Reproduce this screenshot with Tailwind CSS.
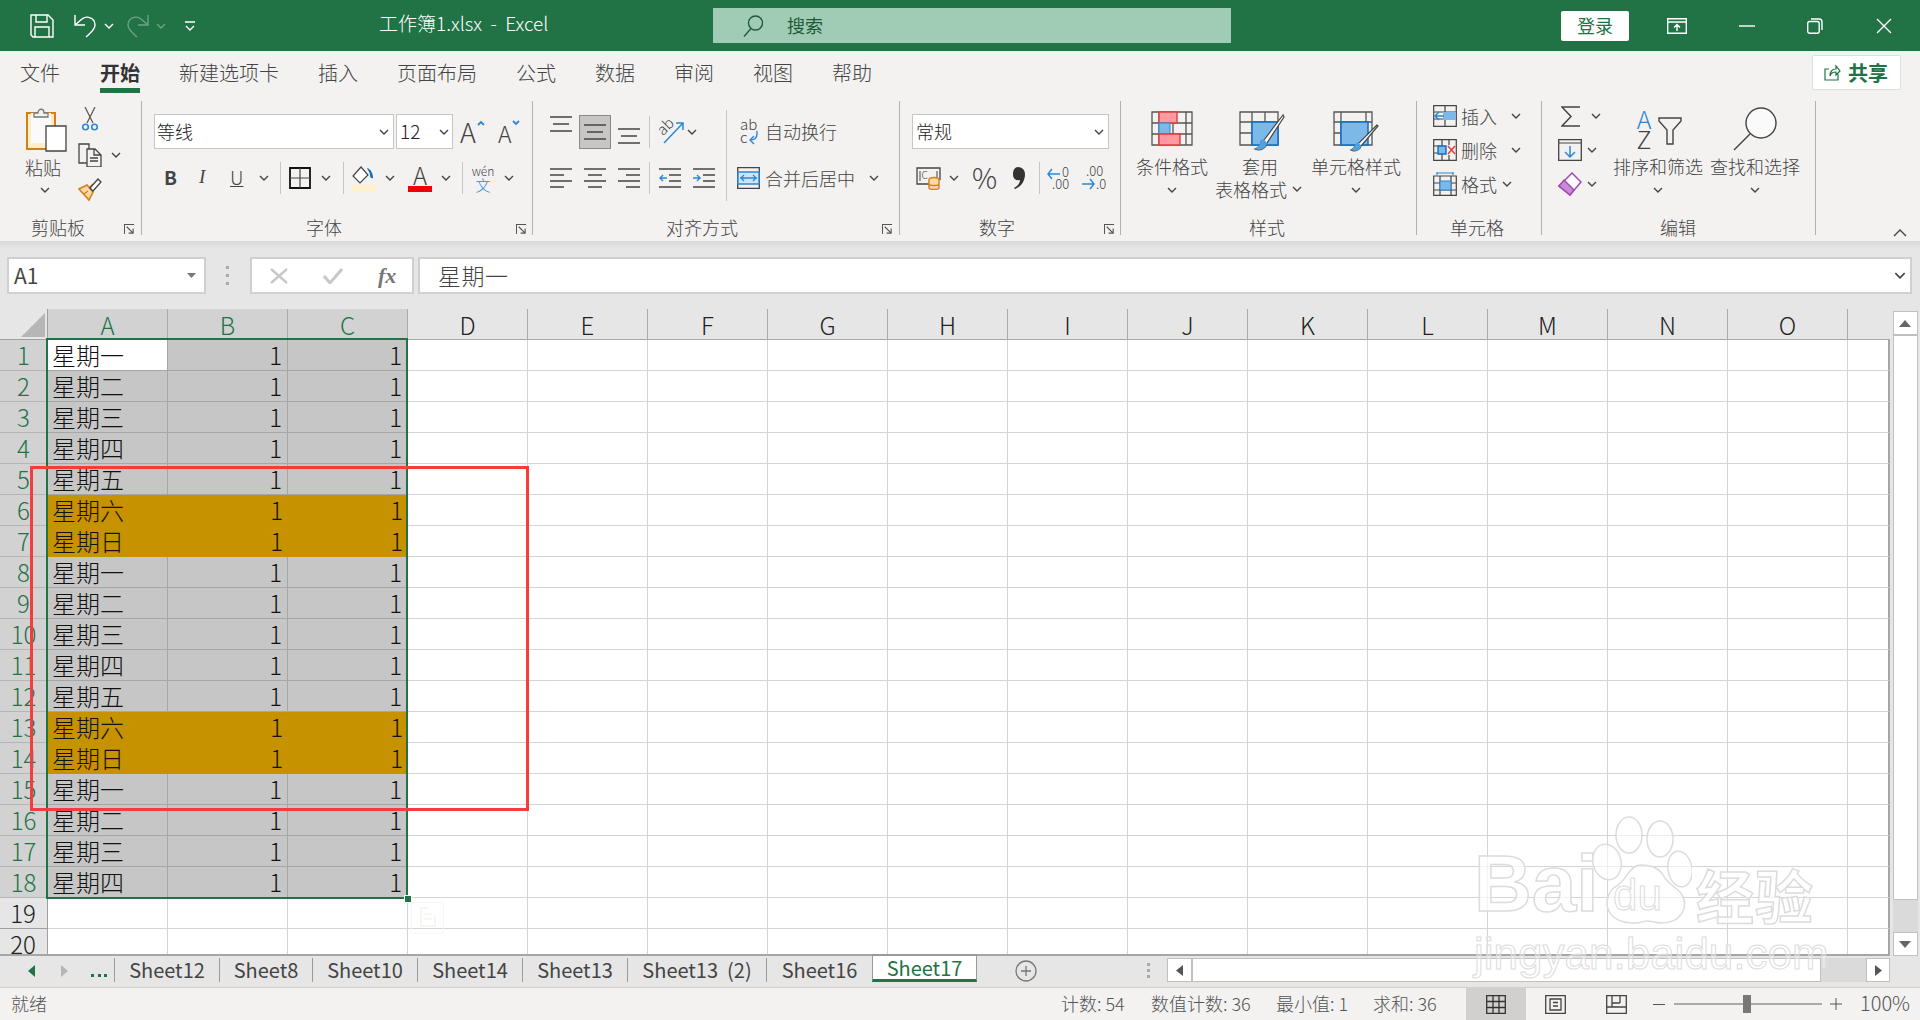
<!DOCTYPE html>
<html lang="zh-CN">
<head>
<meta charset="UTF-8">
<title>工作簿1.xlsx - Excel</title>
<script src="https://cdn.jsdelivr.net/npm/@tailwindcss/browser@4"></script>
</head>
<body class="w-[1920px] h-[1020px] overflow-hidden flex flex-col bg-[#e6e6e6] text-[#444] [font-family:'Noto_Sans_CJK_SC','Liberation_Sans',sans-serif] font-light">

<svg class="hidden">
  <symbol id="chev" viewBox="0 0 10 6"><path d="M1 1l4 4 4-4" fill="none" stroke="#444" stroke-width="1.4"/></symbol>
  <symbol id="launch" viewBox="0 0 12 12"><path d="M.5 11V.5H11M3 3l7 7M10 5v5H5" fill="none" stroke="#555" stroke-width="1.2"/></symbol>
  <symbol id="lines3" viewBox="0 0 22 16"><path d="M0 1h22M3 8h16M0 15h22" stroke="#444" stroke-width="1.3"/></symbol>
</svg>

<!-- title bar -->
<header class="h-[51px] shrink-0 bg-[#217346] flex items-center text-white">
  <svg class="ml-[30px]" width="24" height="24" viewBox="0 0 24 24" fill="none" stroke="#fff" stroke-width="1.4"><path d="M1 1h17l5 5v17H3l-2-2zM6 1v7h11V1M5 23v-10h14v10"/></svg>
  <svg class="ml-[19px]" width="24" height="24" viewBox="0 0 24 24" fill="none" stroke="#fff" stroke-width="1.4"><path d="M2 1v10h10M2 11l7-6c5-4 13-1 13 6 0 5-5 8-9 12"/></svg>
  <svg class="ml-[7px] w-[10px] h-[6px]" viewBox="0 0 10 6"><path d="M1 1l4 4 4-4" fill="none" stroke="#fff" stroke-width="1.4"/></svg>
  <svg class="ml-[12px]" width="24" height="24" viewBox="0 0 24 24" fill="none" stroke="#6ca287" stroke-width="1.4"><path d="M22 1v10H12M22 11l-7-6C10 1 2 4 2 11c0 5 5 8 9 12"/></svg>
  <svg class="ml-[6px] w-[10px] h-[6px]" viewBox="0 0 10 6"><path d="M1 1l4 4 4-4" fill="none" stroke="#6ca287" stroke-width="1.4"/></svg>
  <svg class="ml-[19px]" width="10" height="10" viewBox="0 0 10 10" fill="none" stroke="#fff" stroke-width="1.4"><path d="M0 1h10M1 5l4 4 4-4"/></svg>
  <span class="ml-[184px] text-[19px] w-[170px] -mt-[4px] whitespace-pre">工作簿1.xlsx  -  Excel</span>
  <div class="ml-[164px] w-[518px] h-[35px] bg-[#a0cbb4] flex items-center">
    <svg class="ml-[30px]" width="20" height="22" viewBox="0 0 20 22" fill="none" stroke="#1e5a38" stroke-width="1.4"><circle cx="12.500" cy="8" r="7"/><path d="M8 13.500L1 21.500"/></svg>
    <span class="ml-[24px] text-[18px] font-normal text-[#1e5a38]">搜索</span>
  </div>
  <button class="ml-[330px] w-[68px] h-[30px] bg-white rounded-[2px] text-[18px] font-normal text-[#217346]">登录</button>
  <svg class="ml-[38px]" width="20" height="16" viewBox="0 0 20 16" fill="none" stroke="#fff" stroke-width="1.4"><path d="M.7.7h18.600v14.600H.7zM1 4h18M10 13V7M7 9.500l3-3 3 3"/></svg>
  <svg class="ml-[52px]" width="16" height="2" viewBox="0 0 16 2"><path d="M0 1h16" stroke="#fff" stroke-width="1.4"/></svg>
  <svg class="ml-[52px]" width="16" height="16" viewBox="0 0 16 16" fill="none" stroke="#fff" stroke-width="1.4"><rect x=".7" y="3.500" width="11.500" height="11.800" rx="2"/><path d="M4 1h8a3 3 0 013 3v8"/></svg>
  <svg class="ml-[53px]" width="16" height="16" viewBox="0 0 16 16" fill="none" stroke="#fff" stroke-width="1.4"><path d="M1 1l14 14M15 1L1 15"/></svg>
</header>

<!-- ribbon -->
<section class="h-[190px] shrink-0 bg-[#f3f2f1] flex flex-col">
  <nav class="h-[42px] shrink-0 flex items-start gap-[39px] pl-[20px] text-[20px] leading-[44px] text-[#444] relative">
    <span>文件</span>
    <span class="ml-[1px] font-bold text-[#333] h-[42px] border-b-[5px] border-[#217346]">开始</span>
    <span>新建选项卡</span><span>插入</span><span>页面布局</span><span>公式</span><span>数据</span><span>审阅</span><span>视图</span><span>帮助</span>
    <div class="ml-auto mr-[19px] mt-[4px] w-[89px] h-[35px] bg-white border border-[#e1dfdd] rounded-[2px] flex items-center">
      <svg class="ml-[11px]" width="17" height="17" viewBox="0 0 17 17" fill="none" stroke="#217346" stroke-width="1.2"><path d="M14 10v6H1V5h4M6 12c0-5 3-7 6-7V2l4 5-4 4V8c-3 0-5 1-6 4z"/></svg>
      <span class="ml-[7px] font-bold text-[#217346] text-[20px] leading-none">共享</span>
    </div>
  </nav>
  <div class="flex pt-[8px] h-[148px] text-[18px] leading-[22px]">

    <!-- clipboard -->
    <div class="w-[142px] h-[134px] shrink-0 border-r border-[#b3b0ad] flex flex-col">
      <div class="h-[115px] shrink-0 flex">
        <div class="ml-[25px] w-[42px] flex flex-col">
          <svg class="mt-[6px] ml-[1px]" width="41" height="45" viewBox="0 0 41 45"><path d="M1 6h28v36H1z" fill="#fdeecb" stroke="#d67f16" stroke-width="2"/><path d="M5 6h20v30H5z" fill="#fafafa"/><path d="M8 10V6h4c0-5 6-5 6 0h4v4z" fill="#f3f2f1" stroke="#777" stroke-width="1.300"/><path d="M20 19h20v25H20z" fill="#fff" stroke="#444" stroke-width="1.300"/></svg>
          <span class="mt-[4px]">粘贴</span>
          <svg class="mt-[9px] ml-[15px] w-[10px] h-[6px] shrink-0"><use href="#chev"/></svg>
        </div>
        <div class="ml-[11px] flex flex-col">
          <svg class="mt-[6px] ml-[4px]" width="16" height="24" viewBox="0 0 16 24" fill="none"><path d="M3 0l8 16M13 0L5 16" stroke="#555" stroke-width="1.200"/><circle cx="3.500" cy="20" r="2.800" stroke="#2b88d8" stroke-width="1.600"/><circle cx="12.500" cy="20" r="2.800" stroke="#2b88d8" stroke-width="1.600"/></svg>
          <div class="mt-[12px] flex items-center">
            <svg width="24" height="24" viewBox="0 0 24 24" fill="none" stroke="#444" stroke-width="1.300"><path d="M9 20H1V1h10v5M9 6h8l6 6v12H9zM16 6v6h7M12 15h8M12 18h8"/></svg>
            <svg class="ml-[9px] w-[10px] h-[6px]"><use href="#chev"/></svg>
          </div>
          <svg class="mt-[11px]" width="24" height="24" viewBox="0 0 24 24"><path d="M1 11l10 11 4-8-6-7z" fill="#fbd9a8" stroke="#d67f16" stroke-width="1.600"/><path d="M6 16l4-3M11 10l4-4" stroke="#d67f16" stroke-width="1.400"/><path d="M12 10L20 1l3 3-8 9z" fill="#fff" stroke="#444" stroke-width="1.300"/></svg>
        </div>
      </div>
      <div class="flex pl-[31px] pr-[6px]"><span>剪贴板</span><svg class="ml-auto mt-[8px] w-[11px] h-[11px]"><use href="#launch"/></svg></div>
    </div>

    <!-- font -->
    <div class="w-[391px] h-[134px] shrink-0 border-r border-[#b3b0ad] flex flex-col">
      <div class="h-[115px] shrink-0 pl-[12px]">
        <div class="mt-[13px] h-[35px] flex">
          <div class="w-[240px] bg-white border border-[#c8c6c4] flex items-center pl-[2px] pb-[2px] text-[#222]">等线<svg class="ml-auto mr-[4px] mt-[2px] w-[10px] h-[6px]"><use href="#chev"/></svg></div>
          <div class="ml-[2px] w-[57px] bg-white border border-[#c8c6c4] flex items-center pl-[3px] pb-[2px] text-[#222] text-[19px]">12<svg class="ml-auto mr-[3px] mt-[2px] w-[10px] h-[6px]"><use href="#chev"/></svg></div>
          <span class="ml-[7px] w-[17px] text-[27px] leading-[36px]">A</span>
          <svg class="mt-[6px]" width="8" height="6" viewBox="0 0 8 6"><path d="M1 5l3-3 3 3" fill="none" stroke="#2b88d8" stroke-width="1.800"/></svg>
          <span class="ml-[13px] w-[14px] text-[23px] leading-[38px]">A</span>
          <svg class="mt-[6px]" width="8" height="6" viewBox="0 0 8 6"><path d="M1 1l3 3 3-3" fill="none" stroke="#2b88d8" stroke-width="1.800"/></svg>
        </div>
        <div class="mt-[12px] h-[34px] flex items-center">
          <span class="ml-[10px] w-[12px] font-bold text-[19px] -mt-[2px]">B</span>
          <span class="ml-[23px] w-[10px] italic text-[19px] -mt-[2px] [font-family:'Liberation_Serif',serif]">I</span>
          <span class="ml-[21px] w-[15px] underline text-[19px] -mt-[2px]">U</span>
          <svg class="ml-[14px] w-[10px] h-[6px]"><use href="#chev"/></svg>
          <div class="ml-[11px] w-px h-[32px] bg-[#c8c6c4]"></div>
          <svg class="ml-[8px]" width="22" height="22" viewBox="0 0 22 22" fill="none" stroke="#111"><path d="M1 1h20v20H1z" stroke-width="1.800"/><path d="M11 1v20M1 11h20" stroke-width="1.200" stroke="#444"/></svg>
          <svg class="ml-[10px] w-[10px] h-[6px]"><use href="#chev"/></svg>
          <div class="ml-[12px] w-px h-[32px] bg-[#c8c6c4]"></div>
          <svg class="ml-[8px]" width="24" height="25" viewBox="0 0 24 25"><path d="M9 1L1 10l7 7 8-8z" fill="#fff" stroke="#444" stroke-width="1.200"/><path d="M15 2c4 1 6 6 6 10-2 1-3-1-3-3 0-3-2-4-3-7z" fill="#106ebe"/><path d="M0 19h24v6H0z" fill="#fff1cc"/></svg>
          <svg class="ml-[9px] w-[10px] h-[6px]"><use href="#chev"/></svg>
          <div class="ml-[13px] w-[24px] flex flex-col items-center text-[24px] leading-[20px] text-[#444]">A<div class="w-[24px] h-[6px] bg-[#f00000] mt-[1px]"></div></div>
          <svg class="ml-[9px] w-[10px] h-[6px]"><use href="#chev"/></svg>
          <div class="ml-[11px] w-px h-[32px] bg-[#c8c6c4]"></div>
          <div class="ml-[9px] w-[22px] flex flex-col items-center leading-none text-[12px]">wén<span class="text-[15px] text-[#2b88d8]">文</span></div>
          <svg class="ml-[10px] w-[10px] h-[6px]"><use href="#chev"/></svg>
        </div>
      </div>
      <div class="flex pl-[164px] pr-[5px]"><span>字体</span><svg class="ml-auto mt-[8px] w-[11px] h-[11px]"><use href="#launch"/></svg></div>
    </div>

    <!-- alignment -->
    <div class="w-[367px] h-[134px] shrink-0 border-r border-[#b3b0ad] flex flex-col">
      <div class="h-[115px] shrink-0 flex">
        <div class="w-[193px] shrink-0">
          <div class="mt-[13px] h-[35px] flex items-center">
            <svg class="ml-[17px] -mt-[15px] w-[22px] h-[16px]"><use href="#lines3"/></svg>
            <div class="ml-[7px] w-[32px] h-[34px] bg-[#c8c6c4] border border-[#8a8886] flex items-center justify-center"><svg class="w-[22px] h-[16px]"><use href="#lines3"/></svg></div>
            <svg class="ml-[7px] mt-[8px] w-[22px] h-[16px]"><use href="#lines3"/></svg>
            <div class="ml-[9px] w-px h-[32px] bg-[#c8c6c4]"></div>
            <svg class="ml-[9px]" width="25" height="24" viewBox="0 0 25 24" fill="none"><path d="M5 23L24 3M17 3h7v7" stroke="#2b88d8" stroke-width="1.500"/><text x="0" y="13" font-size="15" fill="#444" transform="rotate(-45 6 10)">ab</text></svg>
            <svg class="ml-[3px] w-[10px] h-[6px]"><use href="#chev"/></svg>
          </div>
          <div class="mt-[12px] h-[34px] flex items-center">
            <svg class="ml-[17px]" width="22" height="20" viewBox="0 0 22 20"><path d="M0 1h22M0 7h14M0 13h22M0 19h14" stroke="#444" stroke-width="1.300"/></svg>
            <svg class="ml-[12px]" width="22" height="20" viewBox="0 0 22 20"><path d="M0 1h22M4 7h14M0 13h22M4 19h14" stroke="#444" stroke-width="1.300"/></svg>
            <svg class="ml-[12px]" width="22" height="20" viewBox="0 0 22 20"><path d="M0 1h22M8 7h14M0 13h22M8 19h14" stroke="#444" stroke-width="1.300"/></svg>
            <div class="ml-[9px] w-px h-[32px] bg-[#c8c6c4]"></div>
            <svg class="ml-[9px]" width="22" height="20" viewBox="0 0 22 20" fill="none"><path d="M0 1h22M10 7h12M10 13h12M0 19h22" stroke="#444" stroke-width="1.300"/><path d="M8 10H1M4 7l-3 3 3 3" stroke="#2b88d8" stroke-width="1.400"/></svg>
            <svg class="ml-[12px]" width="22" height="20" viewBox="0 0 22 20" fill="none"><path d="M0 1h22M10 7h12M10 13h12M0 19h22" stroke="#444" stroke-width="1.300"/><path d="M0 10h7M4 7l3 3-3 3" stroke="#2b88d8" stroke-width="1.400"/></svg>
          </div>
        </div>
        <div class="mt-[9px] w-px h-[91px] bg-[#c8c6c4]"></div>
        <div class="flex-1">
          <div class="mt-[13px] h-[35px] flex items-center">
            <svg class="ml-[13px]" width="20" height="26" viewBox="0 0 20 26" fill="none"><text x="0" y="11" font-size="15" fill="#444">ab</text><text x="0" y="24" font-size="15" fill="#444">c</text><path d="M17 12v3c0 5-3 6-7 6M14 17l-4 4 4 4" stroke="#2b88d8" stroke-width="1.400"/></svg>
            <span class="ml-[5px] -mt-[2px]">自动换行</span>
          </div>
          <div class="mt-[12px] h-[34px] flex items-center">
            <svg class="ml-[10px]" width="23" height="22" viewBox="0 0 23 22" fill="none"><path d="M.7.7h21.600v20.600H.7z" stroke="#444" stroke-width="1.300"/><path d="M1 5h21v12H1z" fill="#cfe4f6" stroke="#2b88d8" stroke-width="1.400"/><path d="M3 11h17M7 8l-3 3 3 3M16 8l3 3-3 3" stroke="#2b88d8" stroke-width="1.300"/></svg>
            <span class="ml-[5px]">合并后居中</span>
            <svg class="ml-[14px] w-[10px] h-[6px]"><use href="#chev"/></svg>
          </div>
        </div>
      </div>
      <div class="flex pl-[133px] pr-[6px]"><span>对齐方式</span><svg class="ml-auto mt-[8px] w-[11px] h-[11px]"><use href="#launch"/></svg></div>
    </div>

    <!-- number -->
    <div class="w-[221px] h-[134px] shrink-0 border-r border-[#b3b0ad] flex flex-col">
      <div class="h-[115px] shrink-0">
        <div class="mt-[13px] ml-[12px] w-[197px] h-[35px] bg-white border border-[#c8c6c4] flex items-center pl-[3px] pb-[2px] text-[#222]">常规<svg class="ml-auto mr-[4px] mt-[2px] w-[10px] h-[6px]"><use href="#chev"/></svg></div>
        <div class="mt-[12px] h-[34px] flex items-center">
          <svg class="ml-[16px]" width="25" height="24" viewBox="0 0 25 24" fill="none"><path d="M14 18H1V2h23v12" stroke="#444" stroke-width="1.300"/><path d="M4 5v10M21 5v8" stroke="#444"/><text x="5.500" y="13" font-size="10" fill="#444">C</text><ellipse cx="18" cy="14" rx="5" ry="2.500" fill="#fbd9a8" stroke="#d67f16" stroke-width="1.400"/><path d="M13 14v8c0 2 10 2 10 0v-8M13 18c0 2 10 2 10 0" fill="#fbd9a8" stroke="#d67f16" stroke-width="1.400"/></svg>
          <svg class="ml-[8px] w-[10px] h-[6px]"><use href="#chev"/></svg>
          <span class="ml-[13px] w-[23px] text-[28px] leading-none -mt-[2px]">%</span>
          <svg class="ml-[18px]" width="12" height="23" viewBox="0 0 12 23"><path d="M5 0c4 0 7 3 7 7 0 7-4 13-10 15l-1-1c4-2 6-5 6-8-4 1-7-1-7-6 0-4 2-7 5-7z" fill="#333"/></svg>
          <div class="ml-[14px] w-px h-[32px] bg-[#c8c6c4]"></div>
          <svg class="ml-[7px]" width="24" height="24" viewBox="0 0 24 24" fill="none"><path d="M13 8H1M5 3L1 8l4 5" stroke="#2b88d8" stroke-width="1.500"/><text x="15" y="11" font-size="13" fill="#444">0</text><text x="5" y="23" font-size="13" fill="#444">.00</text></svg>
          <svg class="ml-[11px]" width="24" height="24" viewBox="0 0 24 24" fill="none"><text x="4" y="10" font-size="13" fill="#444">.00</text><path d="M0 18h12M8 13l4 5-4 5" stroke="#2b88d8" stroke-width="1.500"/><text x="14" y="23" font-size="13" fill="#444">.0</text></svg>
        </div>
      </div>
      <div class="flex pl-[79px] pr-[5px]"><span>数字</span><svg class="ml-auto mt-[8px] w-[11px] h-[11px]"><use href="#launch"/></svg></div>
    </div>

    <!-- styles -->
    <div class="w-[296px] h-[134px] shrink-0 border-r border-[#b3b0ad] flex flex-col">
      <div class="h-[115px] shrink-0 flex">
        <div class="ml-[15px] w-[72px] flex flex-col items-center">
          <div class="h-[54px] pt-[10px]">
            <svg width="42" height="35" viewBox="0 0 42 35" fill="none"><path d="M1 1h40v33H1zM1 12h40M1 23h40M8 1v33M22 1v33M35 1v33" stroke="#555" stroke-width="1.300"/><path d="M8 1h18v11H8z" fill="#ff9aa2" stroke="#e03c3c" stroke-width="1.400"/><path d="M8 12h11v11H8z" fill="#7cb9e8" stroke="#2b88d8"/><path d="M8 23h21v11H8z" fill="#ff9aa2" stroke="#e03c3c" stroke-width="1.400"/></svg>
          </div>
          <span>条件格式</span>
          <svg class="mt-[10px] w-[10px] h-[6px] shrink-0"><use href="#chev"/></svg>
        </div>
        <div class="ml-[7px] w-[87px] flex flex-col">
          <div class="h-[54px] pt-[10px] pl-[24px]">
            <svg width="46" height="41" viewBox="0 0 46 41" fill="none"><path d="M1 1h38v33H1zM1 11h38M1 22h38M13 1v33M26 1v33" stroke="#555" stroke-width="1.300"/><path d="M13 11h26v23H13z" fill="#7cb9e8" stroke="#106ebe" stroke-width="1.500"/><path d="M44 4L25 29c-2 0-3 1-3 3-1 3-3 5-6 6 5 2 11 0 12-6l17-26z" fill="#fff" stroke="#444" stroke-width="1.200"/><path d="M22 30c-1 4-3 6-6 8 5 2 11 0 12-6l-3-4z" fill="#4fa3e0"/></svg>
          </div>
          <span class="pl-[27px]">套用</span>
          <div class="flex items-center leading-[24px] whitespace-nowrap">表格格式<svg class="ml-[5px] w-[10px] h-[6px]"><use href="#chev"/></svg></div>
        </div>
        <div class="ml-[9px] w-[90px] flex flex-col items-center">
          <div class="h-[54px] pt-[10px]">
            <svg width="46" height="41" viewBox="0 0 46 41" fill="none"><path d="M1 1h38v33H1zM1 11h38M1 22h38M8 1v33M33 1v33" stroke="#555" stroke-width="1.300"/><path d="M8 11h27v23H8z" fill="#7cb9e8" stroke="#106ebe" stroke-width="1.500"/><path d="M44 14L25 33c-2 0-3 1-3 2-1 2-2 3-4 4 4 2 9 0 10-4l17-20z" fill="#fff" stroke="#444" stroke-width="1.200"/><path d="M24 31c-2 3-3 5-6 8 5 2 10 0 10-5z" fill="#4fa3e0"/></svg>
          </div>
          <span>单元格样式</span>
          <svg class="mt-[10px] w-[10px] h-[6px] shrink-0"><use href="#chev"/></svg>
        </div>
      </div>
      <div class="pl-[128px]">样式</div>
    </div>

    <!-- cells -->
    <div class="w-[125px] h-[134px] shrink-0 border-r border-[#b3b0ad] flex flex-col">
      <div class="h-[115px] shrink-0">
        <div class="h-[34px] -mt-[2px] flex items-center">
          <svg class="ml-[16px]" width="24" height="22" viewBox="0 0 24 22" fill="none"><path d="M.7.7h22.600v20.600H.7zM1 7h22M1 14h22M12 1v20" stroke="#444" stroke-width="1.200"/><path d="M10 7h13v8H10z" fill="#7cb9e8"/><path d="M11 11H2M6 7l-4 4 4 4" stroke="#2b88d8" stroke-width="1.500"/></svg>
          <span class="ml-[4px]">插入</span><svg class="ml-[14px] w-[10px] h-[6px]"><use href="#chev"/></svg>
        </div>
        <div class="h-[34px] flex items-center">
          <svg class="ml-[16px]" width="24" height="22" viewBox="0 0 24 22" fill="none"><path d="M.7.7h22.600v20.600H.7zM1 7h8M1 14h8M9 1v6M9 14v7M16 1v5M16 16v5" stroke="#444" stroke-width="1.200"/><path d="M5 7h8v8H5z" fill="#7cb9e8" stroke="#106ebe" stroke-width="1.400"/><path d="M15 7l7 8M22 7l-7 8" stroke="#f03a3a" stroke-width="1.600"/></svg>
          <span class="ml-[4px]">删除</span><svg class="ml-[14px] w-[10px] h-[6px]"><use href="#chev"/></svg>
        </div>
        <div class="h-[34px] flex items-center">
          <svg class="ml-[16px]" width="24" height="24" viewBox="0 0 24 24" fill="none"><path d="M.7 4h22.600v19.300H.7zM1 11h22M1 18h22M7 4v19M18 4v19" stroke="#444" stroke-width="1.200"/><path d="M7 9h11v9H7z" fill="#7cb9e8" stroke="#2b88d8"/><path d="M4 1h16M4 0v3M20 0v3" stroke="#2b88d8" stroke-width="1.200"/></svg>
          <span class="ml-[4px]">格式</span><svg class="ml-[5px] w-[10px] h-[6px]"><use href="#chev"/></svg>
        </div>
      </div>
      <div class="pl-[33px]">单元格</div>
    </div>

    <!-- editing -->
    <div class="w-[274px] h-[134px] shrink-0 border-r border-[#b3b0ad] flex flex-col">
      <div class="h-[115px] shrink-0 flex">
        <div class="ml-[16px] w-[55px]">
          <div class="h-[34px] -mt-[2px] flex items-center">
            <svg class="ml-[3px]" width="19" height="21" viewBox="0 0 19 21" fill="none"><path d="M19 1H1l9 9.500L1 20h18" stroke="#444" stroke-width="1.500"/></svg>
            <svg class="ml-[11px] w-[10px] h-[6px]"><use href="#chev"/></svg>
          </div>
          <div class="h-[34px] flex items-center">
            <svg width="24" height="22" viewBox="0 0 24 22" fill="none"><path d="M.7.7h22.600v20.600H.7z" stroke="#444" stroke-width="1.300"/><path d="M1 4h22" stroke="#444"/><path d="M12 7v11M7 13l5 5 5-5" stroke="#2b88d8" stroke-width="1.500"/></svg>
            <svg class="ml-[5px] w-[10px] h-[6px]"><use href="#chev"/></svg>
          </div>
          <div class="h-[34px] flex items-center">
            <svg width="24" height="24" viewBox="0 0 24 24"><path d="M14 1l9 9-11 13-11-9z" fill="#fff" stroke="#a24bb3" stroke-width="1.500"/><path d="M6 8l10 10-4 5-11-9z" fill="#c88bd4" stroke="#a24bb3" stroke-width="1.500"/></svg>
            <svg class="ml-[5px] w-[10px] h-[6px]"><use href="#chev"/></svg>
          </div>
        </div>
        <div class="w-[90px] flex flex-col items-center">
          <div class="h-[54px] pt-[7px] flex">
            <div class="w-[19px] flex flex-col items-center text-[25px] leading-[20px]"><span class="text-[#2b88d8]">A</span><span class="text-[#444]">Z</span></div>
            <svg class="ml-[4px] mt-[9px]" width="24" height="28" viewBox="0 0 24 28" fill="none"><path d="M1 1h22v3l-8 9v14H9V13L1 4z" stroke="#444" stroke-width="1.400"/></svg>
          </div>
          <span>排序和筛选</span>
          <svg class="mt-[10px] w-[10px] h-[6px] shrink-0"><use href="#chev"/></svg>
        </div>
        <div class="ml-[7px] w-[90px] flex flex-col items-center">
          <div class="h-[54px] pt-[6px]">
            <svg width="44" height="44" viewBox="0 0 44 44" fill="none" stroke="#444" stroke-width="1.400"><circle cx="28" cy="16" r="15" fill="#fafafa"/><path d="M17 27L1 43"/></svg>
          </div>
          <span>查找和选择</span>
          <svg class="mt-[10px] w-[10px] h-[6px] shrink-0"><use href="#chev"/></svg>
        </div>
      </div>
      <div class="pl-[118px]">编辑</div>
    </div>

    <svg class="self-end ml-auto mr-[13px] mb-[4px] w-[14px] h-[8px]" viewBox="0 0 14 8"><path d="M1 7l6-6 6 6" fill="none" stroke="#444" stroke-width="1.400"/></svg>
  </div>
</section>

<!-- formula bar -->
<section class="h-[68px] shrink-0 bg-[linear-gradient(#d9d9d9,#e6e6e6_8px)] pt-[16px] flex items-start">
  <div class="ml-[7px] w-[199px] h-[37px] bg-white border-2 border-[#d0d0d0] flex items-center pl-[5px] text-[21px] font-normal text-[#444]">A1<svg class="ml-auto mr-[8px]" width="9" height="5" viewBox="0 0 9 5"><path d="M0 0h9L4.500 5z" fill="#777"/></svg></div>
  <div class="ml-[20px] mt-[9px] flex flex-col gap-[5px]"><i class="w-[3px] h-[3px] bg-[#aaa]"></i><i class="w-[3px] h-[3px] bg-[#aaa]"></i><i class="w-[3px] h-[3px] bg-[#aaa]"></i></div>
  <div class="ml-[21px] w-[164px] h-[37px] bg-white border-2 border-[#d0d0d0] flex items-center">
    <svg class="ml-[18px]" width="18" height="16" viewBox="0 0 18 16"><path d="M1 1l16 14M17 1L1 15" stroke="#c8c8c8" stroke-width="2.400"/></svg>
    <svg class="ml-[35px]" width="20" height="16" viewBox="0 0 20 16"><path d="M1 8l6 7L19 1" fill="none" stroke="#c8c8c8" stroke-width="3"/></svg>
    <span class="ml-[35px] italic font-bold text-[22px] text-[#777] [font-family:'Liberation_Serif',serif]">fx</span>
  </div>
  <div class="ml-[4px] w-[1494px] h-[37px] bg-white border-2 border-[#d0d0d0] flex items-center pl-[18px] text-[23px] tracking-[0.5px] text-[#444]">星期一<svg class="ml-auto mr-[4px] w-[12px] h-[7px]"><use href="#chev"/></svg></div>
</section>

<!-- sheet -->
<section class="h-[645px] shrink-0 flex">
  <div class="relative w-[1890px] overflow-hidden bg-white">
    <div id="cells" class="grid grid-cols-[48px_repeat(15,120px)_42px] auto-rows-[31px] text-[24px] leading-[30px] text-[#111]">
      <div class="bg-[#e6e6e6] border-b border-[#9f9f9f] border-r flex items-end justify-end pr-[2px] pb-[2px]"><svg width="24" height="24" viewBox="0 0 24 24"><path d="M24 0v24H0z" fill="#b6b6b6"/></svg></div>
    </div>
    <!-- selection and annotation -->
    <div class="absolute left-[46px] top-[29px] w-[362px] h-[561px] border-2 border-[#217346] pointer-events-none"></div>
    <div class="absolute left-[404px] top-[586px] w-[8px] h-[8px] bg-[#217346] border border-white"></div>
    <div class="absolute left-[30px] top-[157px] w-[499px] h-[345px] border-[3px] border-[#fb3b3b] pointer-events-none"></div>
    <div class="absolute left-[411px] top-[593px] w-[33px] h-[32px] border border-[#f6f6f6] rounded-[1px] flex items-center justify-center"><svg width="18" height="22" viewBox="0 0 18 22" fill="none" stroke="#f8f5f2" stroke-width="2"><path d="M9 1H2v18h14V8M5 7h8M5 12h8"/></svg></div>
  </div>
  <aside class="relative z-10 w-[30px] h-[648px] flex flex-col items-center bg-[#e6e6e6] pt-[2px]">
    <div class="w-[25px] h-[24px] bg-white border border-[#c0c0c0] flex items-center justify-center"><svg width="12" height="7" viewBox="0 0 12 7"><path d="M6 0l6 7H0z" fill="#666"/></svg></div>
    <div class="w-[25px] h-[565px] bg-white border border-[#c0c0c0]"></div>
    <div class="w-[25px] h-[32px] bg-[#dadada]"></div>
    <div class="w-[25px] h-[24px] bg-white border border-[#c0c0c0] flex items-center justify-center"><svg width="12" height="7" viewBox="0 0 12 7"><path d="M0 0h12L6 7z" fill="#666"/></svg></div>
  </aside>
</section>

<!-- sheet tabs -->
<section class="h-[33px] shrink-0 bg-[#e6e6e6] border-t-2 border-[#a6a6a6] flex text-[20px] text-[#444] font-normal">
  <svg class="ml-[28px] mt-[9px]" width="7" height="12" viewBox="0 0 7 12"><path d="M7 0v12L0 6z" fill="#217346"/></svg>
  <svg class="ml-[26px] mt-[9px]" width="7" height="12" viewBox="0 0 7 12"><path d="M0 0v12l7-6z" fill="#b5b5b5"/></svg>
  <div class="ml-[23px] mt-[18px] w-[16px] h-[3px] border-dotted border-t-[3px] border-[#217346]"></div>
  <div class="ml-[7px] flex">
    <div class="w-[105px] h-[24px] mt-[2px] border-l border-[#9a9a9a] flex items-center justify-center">Sheet12</div>
    <div class="w-[93px] h-[24px] mt-[2px] border-l border-[#9a9a9a] flex items-center justify-center">Sheet8</div>
    <div class="w-[105px] h-[24px] mt-[2px] border-l border-[#9a9a9a] flex items-center justify-center">Sheet10</div>
    <div class="w-[105px] h-[24px] mt-[2px] border-l border-[#9a9a9a] flex items-center justify-center">Sheet14</div>
    <div class="w-[105px] h-[24px] mt-[2px] border-l border-[#9a9a9a] flex items-center justify-center">Sheet13</div>
    <div class="w-[139px] h-[24px] mt-[2px] border-l border-[#9a9a9a] flex items-center justify-center whitespace-pre">Sheet13  (2)</div>
    <div class="w-[106px] h-[24px] mt-[2px] border-l border-[#9a9a9a] flex items-center justify-center">Sheet16</div>
    <div class="w-[105px] h-[28px] -mt-[2px] bg-white border-x border-t-2 border-[#9a9a9a] border-b-[3px] border-b-[#217346] flex items-center justify-center text-[#217346]">Sheet17</div>
  </div>
  <svg class="ml-[38px] mt-[4px]" width="22" height="22" viewBox="0 0 22 22" fill="none" stroke="#777" stroke-width="1.300"><circle cx="11" cy="11" r="10"/><path d="M11 6v10M6 11h10"/></svg>
  <div class="ml-[110px] mt-[7px] flex flex-col gap-[3px]"><i class="w-[3px] h-[3px] bg-[#aaa]"></i><i class="w-[3px] h-[3px] bg-[#aaa]"></i><i class="w-[3px] h-[3px] bg-[#aaa]"></i></div>
  <div class="ml-[17px] mt-[2px] h-[24px] flex">
    <div class="w-[25px] bg-white border border-[#c0c0c0] flex items-center justify-center"><svg width="7" height="11" viewBox="0 0 7 11"><path d="M7 0v11L0 5.500z" fill="#555"/></svg></div>
    <div class="w-[629px] bg-white border border-[#c0c0c0]"></div>
    <div class="w-[45px] bg-[#dadada]"></div>
    <div class="w-[24px] bg-white border border-[#c0c0c0] flex items-center justify-center"><svg width="7" height="11" viewBox="0 0 7 11"><path d="M0 0v11l7-5.500z" fill="#555"/></svg></div>
  </div>
</section>

<!-- status bar -->
<footer class="h-[33px] shrink-0 bg-[#f3f2f1] border-t border-[#d2d0ce] flex items-center text-[18px] text-[#555]">
  <span class="ml-[11px] -mt-[2px]">就绪</span>
  <span class="ml-[1014px] w-[68px] -mt-[2px] whitespace-nowrap">计数: 54</span>
  <span class="ml-[22px] w-[103px] -mt-[2px] whitespace-nowrap">数值计数: 36</span>
  <span class="ml-[22px] w-[74px] -mt-[2px] whitespace-nowrap">最小值: 1</span>
  <span class="ml-[23px] w-[66px] -mt-[2px] whitespace-nowrap">求和: 36</span>
  <div class="ml-[27px] w-[60px] h-full bg-[#d2d0ce] flex items-center justify-center">
    <svg width="20" height="19" viewBox="0 0 20 19" fill="none" stroke="#333" stroke-width="1.300"><path d="M.7.7h18.600v17.600H.7zM1 6.500h18M1 12.500h18M7 1v17M13 1v17"/></svg>
  </div>
  <svg class="ml-[19px]" width="21" height="19" viewBox="0 0 21 19" fill="none" stroke="#444" stroke-width="1.300"><path d="M.7.7h19.600v17.600H.7zM5 4h11v11H5zM8 7.500h5M8 11h5"/></svg>
  <svg class="ml-[40px]" width="21" height="19" viewBox="0 0 21 19" fill="none" stroke="#444" stroke-width="1.300"><path d="M.7.7h19.600v17.600H.7zM1 12h19M6 1v11M14 1v7M6 8h8"/></svg>
  <span class="ml-[26px] w-[12px] h-px bg-[#555]"></span>
  <div class="ml-[9px] relative w-[148px] h-[2px] bg-[#aaa]">
    <div class="absolute left-[69px] -top-[8px] w-[8px] h-[18px] bg-[#777]"></div>
  </div>
  <svg class="ml-[8px]" width="12" height="12" viewBox="0 0 12 12"><path d="M0 6h12M6 0v12" stroke="#555"/></svg>
  <span class="ml-[18px] text-[20px] -mt-[2px]">100%</span>
</footer>

<!-- baidu watermark -->
<div class="absolute left-[1474px] top-[812px] w-[344px] h-[170px] pointer-events-none text-[#ffffff]">
  <span class="absolute left-0 top-[27px] text-[80px] leading-[90px] font-bold text-white/70 [font-family:'Liberation_Sans',sans-serif] [-webkit-text-stroke:1.500px_#dcdcdc]">Bai</span>
  <svg class="absolute left-[118px] top-[3px]" width="100" height="110" viewBox="0 0 100 110" fill="#ffffff" fill-opacity=".6" stroke="#dcdcdc" stroke-width="1.500"><ellipse cx="37" cy="20" rx="13" ry="18"/><ellipse cx="68" cy="24" rx="13" ry="18"/><ellipse cx="15" cy="47" rx="14" ry="18" transform="rotate(-15 15 47)"/><ellipse cx="88" cy="54" rx="12" ry="18" transform="rotate(-10 88 54)"/><path d="M49 50c-12 0-14 16-26 22-12 8-14 36 20 36 6 0 8-2 12-2s8 2 14 2c22 0 28-18 20-30-8-8-14-10-18-18-4-7-12-10-22-10z"/></svg>
  <span class="absolute left-[139px] top-[58px] text-[44px] leading-[50px] text-white/40 [font-family:'Liberation_Sans',sans-serif] [-webkit-text-stroke:1px_#dcdcdc]">du</span>
  <span class="absolute left-[222px] top-[47px] text-[58px] leading-[70px] font-bold tracking-[1px] text-white/70 [-webkit-text-stroke:1.500px_#dcdcdc]">经验</span>
  <span class="absolute left-0 top-[117px] text-[44px] leading-[50px] whitespace-nowrap text-white/40 [font-family:'Liberation_Sans',sans-serif] [-webkit-text-stroke:1px_#dcdcdc]">jingyan.baidu.com</span>
</div>

<script>
  // builds header row and the 20 visible rows
  var grid = document.getElementById('cells');
  var days = ['星期一','星期二','星期三','星期四','星期五','星期六','星期日','星期一','星期二','星期三','星期四','星期五','星期六','星期日','星期一','星期二','星期三','星期四'];
  var html = '';
  'ABCDEFGHIJKLMNO'.split('').concat(['']).forEach(function (c, i) {
    if (i < 3) html += '<div class="bg-[#d2d2d2] text-[#217346] border-r border-[#ababab] text-center leading-[32px]">' + c + '</div>';
    else if (i == 15) html += '<div class="bg-[#e6e6e6] border-b border-[#ababab]"></div>';
    else html += '<div class="bg-[#e6e6e6] text-[#222] border-r border-b border-[#ababab] text-center leading-[32px]">' + c + '</div>';
  });
  for (var r = 1; r <= 20; r++) {
    var sel = r <= 18;
    html += sel
      ? '<div class="bg-[#d2d2d2] text-[#217346] border-b border-[#b5b5b5] text-center pr-[1px]">' + r + '</div>'
      : '<div class="bg-[#e6e6e6] text-[#222] border-r border-b border-[#9f9f9f] text-center pr-[1px]">' + r + '</div>';
    var orange = r == 6 || r == 7 || r == 13 || r == 14;
    for (var c = 0; c < 16; c++) {
      if (sel && c < 3) {
        var text = c == 0 ? days[r - 1] : '1';
        var align = c == 0 ? ' pl-[4px]' : ' text-right pr-[5px]';
        if (orange) html += '<div class="bg-[#c69200]' + align + '">' + text + '</div>';
        else if (r == 1 && c == 0) html += '<div class="bg-white border-r border-b border-[#a6a6a6]' + align + '">' + text + '</div>';
        else html += '<div class="bg-[#c6c6c6] border-r border-b border-[#a6a6a6]' + align + '">' + text + '</div>';
      } else if (c == 15) {
        html += '<div class="border-r-2 border-b border-r-[#a6a6a6] border-b-[#d4d4d4]"></div>';
      } else {
        html += '<div class="border-r border-b border-[#d4d4d4]"></div>';
      }
    }
  }
  grid.insertAdjacentHTML('beforeend', html);
</script>
</body>
</html>
